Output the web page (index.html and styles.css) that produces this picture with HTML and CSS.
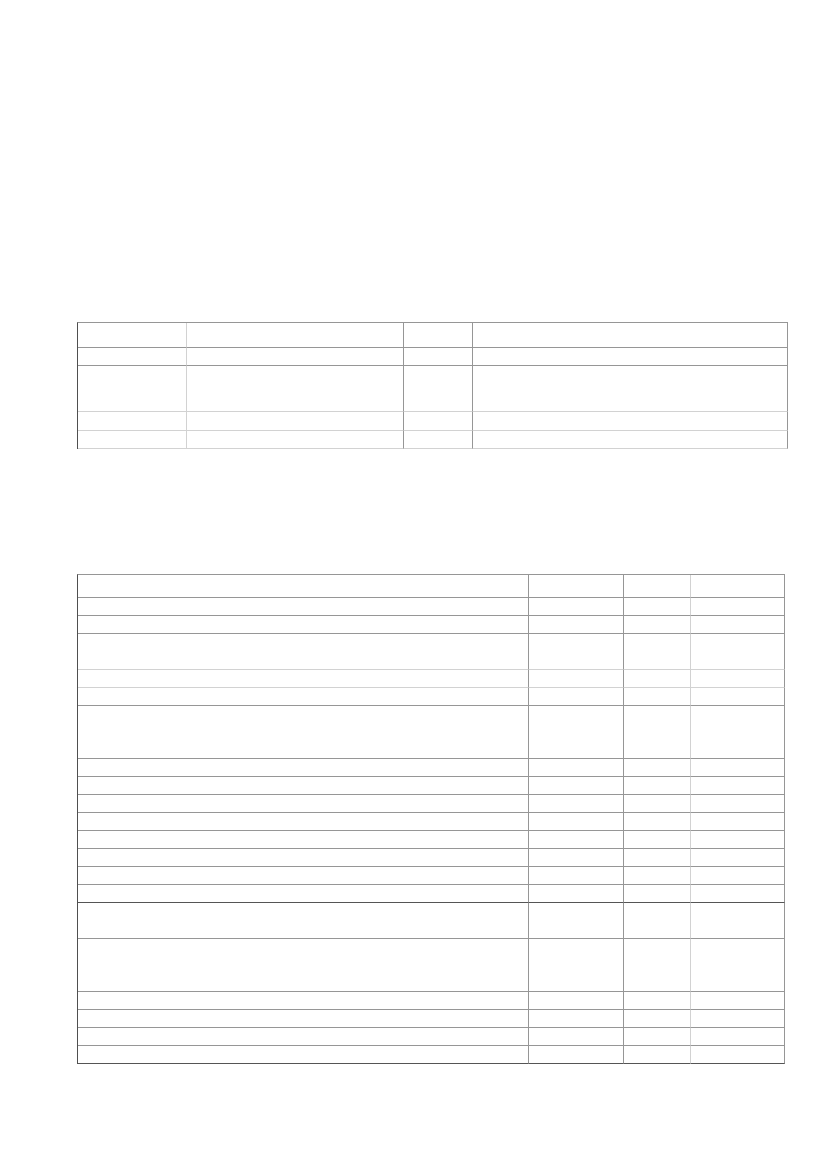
FILE: index.html
```html
<!DOCTYPE html>
<html lang="en">
<head>
<meta charset="utf-8">
<title>Tables</title>
<link rel="stylesheet" href="styles.css">
</head>
<body>
<div class="page">
  <table class="grid grid-one">
    <colgroup>
      <col class="c1-a"><col class="c1-b"><col class="c1-c"><col class="c1-d">
    </colgroup>
    <tr class="h25 mid"><td class="lt"></td><td></td><td></td><td></td></tr>
    <tr class="h18 mid"><td class="lt"></td><td></td><td></td><td></td></tr>
    <tr class="h46 lite"><td class="lt"></td><td></td><td></td><td></td></tr>
    <tr class="h19 lite"><td class="lt"></td><td></td><td></td><td></td></tr>
    <tr class="h18 lite"><td class="lt"></td><td></td><td></td><td></td></tr>
  </table>

  <table class="grid grid-two">
    <colgroup>
      <col class="c2-a"><col class="c2-b"><col class="c2-c"><col class="c2-d">
    </colgroup>
    <tr class="h23 mid"><td></td><td></td><td class="lt"></td><td></td></tr>
    <tr class="h18 mid"><td></td><td></td><td class="lt"></td><td></td></tr>
    <tr class="h18 mid"><td></td><td></td><td class="lt"></td><td></td></tr>
    <tr class="h36 lite"><td></td><td></td><td class="lt"></td><td></td></tr>
    <tr class="h18 lite"><td></td><td></td><td class="lt"></td><td></td></tr>
    <tr class="h18 mid"><td></td><td></td><td class="lt"></td><td></td></tr>
    <tr class="h53 mid"><td></td><td></td><td class="lt"></td><td></td></tr>
    <tr class="h18 mid"><td></td><td></td><td class="lt"></td><td></td></tr>
    <tr class="h18 mid"><td></td><td></td><td class="lt"></td><td></td></tr>
    <tr class="h18 mid"><td></td><td></td><td class="lt"></td><td></td></tr>
    <tr class="h18 mid"><td></td><td></td><td class="lt"></td><td></td></tr>
    <tr class="h18 mid"><td></td><td></td><td class="lt"></td><td></td></tr>
    <tr class="h18 mid"><td></td><td></td><td class="lt"></td><td></td></tr>
    <tr class="h18 mid"><td></td><td></td><td class="lt"></td><td></td></tr>
    <tr class="h18 dark"><td></td><td></td><td class="lt"></td><td></td></tr>
    <tr class="h36 mid"><td></td><td></td><td class="lt"></td><td></td></tr>
    <tr class="h53 mid"><td></td><td></td><td class="lt"></td><td></td></tr>
    <tr class="h18 mid"><td></td><td></td><td class="lt"></td><td></td></tr>
    <tr class="h18 mid"><td></td><td></td><td class="lt"></td><td></td></tr>
    <tr class="h18 mid"><td></td><td></td><td class="lt"></td><td></td></tr>
    <tr class="h18 dark"><td></td><td></td><td class="lt"></td><td></td></tr>
  </table>
</div>
</body>
</html>
```

FILE: styles.css
```css
html, body {
  margin: 0;
  padding: 0;
  background: #ffffff;
  font-family: "Liberation Sans", Arial, sans-serif;
}

.page {
  padding: 322px 0 0 77px;
}

.grid {
  border-collapse: separate;
  border-spacing: 0;
  table-layout: fixed;
  border-top: 1px solid #969696;
  border-left: 1px solid #4f4f4f;
}

.grid td {
  box-sizing: border-box;
  padding: 0;
  border-right: 1px solid #969696;
  border-bottom: 1px solid #969696;
}

.grid td.lt {
  border-right-color: #d2d2d2;
}

.grid tr.lite td {
  border-bottom-color: #d2d2d2;
}

.grid tr.dark td {
  border-bottom-color: #555555;
}

.grid-one {
  width: 711px;
}

.grid-two {
  width: 708px;
  margin-top: 125px;
}

.c1-a { width: 109px; }
.c1-b { width: 217px; }
.c1-c { width: 69px; }
.c1-d { width: 315px; }

.c2-a { width: 451px; }
.c2-b { width: 95px; }
.c2-c { width: 67px; }
.c2-d { width: 94px; }

.h18 td { height: 18px; }
.h19 td { height: 19px; }
.h23 td { height: 23px; }
.h25 td { height: 25px; }
.h36 td { height: 36px; }
.h46 td { height: 46px; }
.h53 td { height: 53px; }
```
